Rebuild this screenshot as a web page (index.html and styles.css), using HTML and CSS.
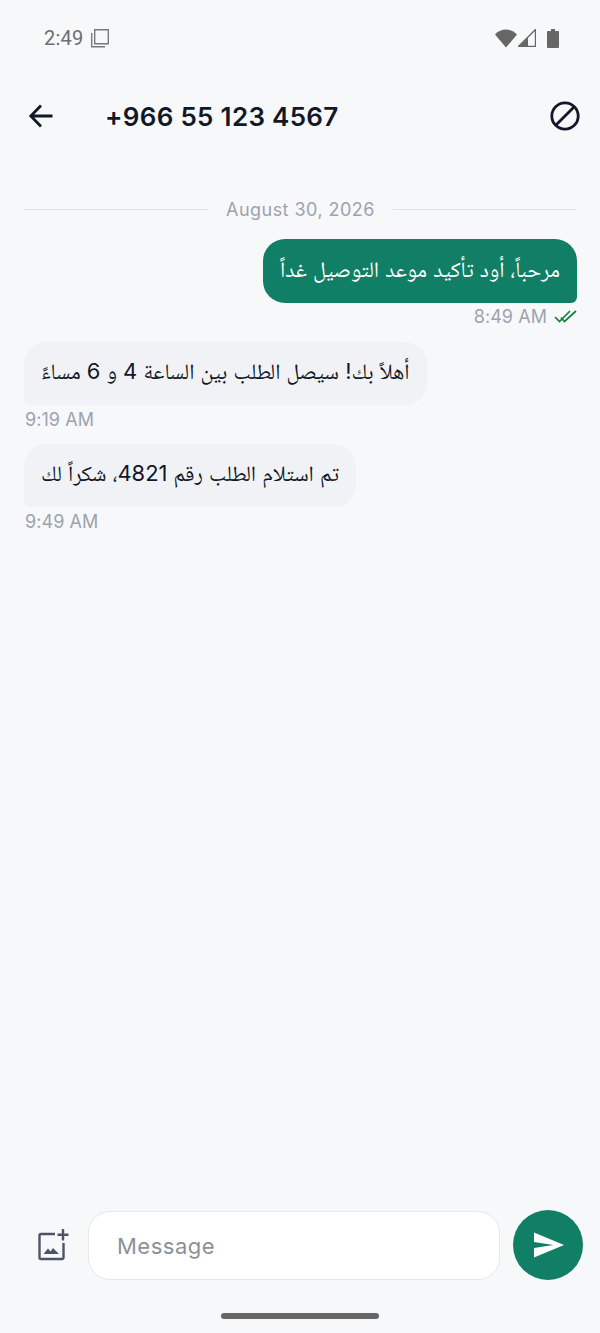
FILE: index.html
```html
<!DOCTYPE html>
<html lang="en">
<head>
<meta charset="utf-8">
<title>Chat</title>
<link rel="stylesheet" href="styles.css">
</head>
<body>
<div class="screen">
  <div class="status">
    <div class="status-left">
      <span class="clock">2:49</span>
      <svg class="ic-copy" width="20" height="20" viewBox="0 0 20 20"><path d="M4.700 1.700h13.600v14.100H4.700z" fill="none" stroke="#77797c" stroke-width="1.400"/><path d="M1.700 5v13.800H15" fill="none" stroke="#77797c" stroke-width="1.400"/></svg>
    </div>
    <div class="status-right">
      <svg width="22" height="19" viewBox="0 0 22 19"><path d="M0 5.500C3 2.200 7 .5 11 .5s8 1.700 11 5L11 18.500z" fill="#666"/></svg>
      <svg width="18" height="18" viewBox="0 0 18 18"><path d="M.5 17.500 17.500.5v17z" fill="none" stroke="#666" stroke-width="1.400"/><path d="M1 17.500 10 8.500v9z" fill="#666"/></svg>
      <svg width="12" height="19" viewBox="0 0 12 19"><path d="M4 0h4v2h3a1 1 0 0 1 1 1v15a1 1 0 0 1-1 1H1a1 1 0 0 1-1-1V3a1 1 0 0 1 1-1h3z" fill="#666"/></svg>
    </div>
  </div>
  <header class="topbar">
    <svg class="back" width="26" height="24" viewBox="0 0 26 24"><path d="M24.500 12H4M13 1.500 2.800 12 13 22.500" fill="none" stroke="#111827" stroke-width="2.800"/></svg>
    <h1 class="title">+966 55 123 4567</h1>
    <svg class="block" width="30" height="30" viewBox="0 0 30 30"><circle cx="15" cy="15" r="13.200" fill="none" stroke="#111827" stroke-width="2.800"/><path d="M6 24 24 6" stroke="#111827" stroke-width="2.800"/></svg>
  </header>
  <main class="thread">
    <div class="date"><span class="rule"></span><span class="date-text">August 30, 2026</span><span class="rule"></span></div>
    <div class="msg out">
      <div class="bubble" dir="rtl">مرحباً، أود تأكيد موعد التوصيل غداً</div>
      <div class="meta"><span>8:49 AM</span>
        <svg width="23" height="14" viewBox="0 0 23 14"><path d="M1 7l4.500 4.500L16 1M7 7.500l3.500 4L22 1" fill="none" stroke="#15803d" stroke-width="1.700"/></svg>
      </div>
    </div>
    <div class="msg in">
      <div class="bubble" dir="rtl">أهلاً بك! سيصل الطلب بين الساعة 4 و 6 مساءً</div>
      <div class="meta"><span>9:19 AM</span></div>
    </div>
    <div class="msg in">
      <div class="bubble" dir="rtl">تم استلام الطلب رقم 4821، شكراً لك</div>
      <div class="meta"><span>9:49 AM</span></div>
    </div>
  </main>
  <footer class="composer">
    <svg class="attach" width="32" height="32" viewBox="0 0 32 32"><path d="M18 5H4a1.500 1.500 0 0 0-1.500 1.500v22A1.500 1.500 0 0 0 4 30h21a1.500 1.500 0 0 0 1.500-1.500V14" fill="none" stroke="#4b5563" stroke-width="2.400"/><path d="M26 0v11.500M20.500 5.700h11" stroke="#4b5563" stroke-width="2.400"/><path d="M6.500 25l4.500-5.500 2.500 3 2.500-3.500 6 6z" fill="#4b5563"/></svg>
    <div class="field">Message</div>
    <button class="send" aria-label="Send"><svg width="31" height="26" viewBox="0 0 32 26"><path d="M0 0 31 13 0 26V16L20 13 0 10z" fill="#fff"/></svg></button>
  </footer>
  <div class="nav"><span class="pill"></span></div>
</div>
</body>
</html>
```
FILE: styles.css
```css
* { box-sizing: border-box; }
html, body { margin: 0; padding: 0; }
body { background: #f7f8fa; font-family: "Inter", "Noto Naskh Arabic", sans-serif; }
.screen { width: 600px; height: 1333px; display: flex; flex-direction: column; overflow: hidden; }
.status { height: 76px; padding: 0 41px 0 44px; display: flex; align-items: center; justify-content: space-between; }
.status-left { display: flex; align-items: center; gap: 7px; }
.clock { font: 400 20px "Roboto", sans-serif; letter-spacing: .2px; color: #6b6d70; }
.status-right { display: flex; align-items: center; }
.status-right svg:nth-child(2) { margin: 0 11px 0 1px; }
.topbar { height: 82px; padding: 0 20px 2px 28px; display: flex; align-items: center; }
.back { flex: none; }
.title { margin: 0 0 0 51px; flex: 1; font: 600 26px "Inter", sans-serif; letter-spacing: .3px; color: #111827; }
.block { flex: none; }
.thread { flex: 1; padding: 41px 23px 0 24px; display: flex; flex-direction: column; }
.date { display: flex; align-items: center; gap: 18px; height: 21px; }
.rule { flex: 1; height: 1.500px; background: #e1e3e7; }
.date-text { font-size: 18px; letter-spacing: .46px; color: #9ca3af; }
.msg { display: flex; flex-direction: column; }
.msg.out { align-items: flex-end; margin-top: 19px; }
.msg.in { align-items: flex-start; margin-top: 12px; }
.msg.in + .msg.in { margin-top: 11px; }
.bubble { padding: 2px 17px 0; display: flex; align-items: center; border-radius: 22px; font-size: 21.950px; }
.out .bubble { height: 64px; background: #117e66; color: #fff; border-bottom-right-radius: 6px; }
.in .bubble { height: 63px; background: #f1f2f5; color: #111827; border-bottom-left-radius: 6px; }
.meta { display: flex; align-items: center; gap: 7px; height: 27px; font-size: 18px; letter-spacing: .06px; color: #9ca3af; }
.in .meta { padding-left: 1px; height: 28px; }
.composer { display: flex; align-items: center; padding: 0 17px 0 37px; height: 70px; }
.attach { flex: none; }
.field { margin-left: 19px; width: 412px; height: 69px; border: 1.500px solid #e5e7eb; border-radius: 22px; background: #fff; display: flex; align-items: center; padding: 2px 0 0 28px; font-size: 22px; letter-spacing: .5px; color: #8b909a; }
.send { margin-left: 13px; width: 70px; height: 70px; border: 0; padding: 0 0 0 2px; border-radius: 50%; background: #117e66; display: flex; align-items: center; justify-content: center; }
.nav { height: 53px; display: flex; justify-content: center; padding-top: 33px; }
.pill { width: 158px; height: 5.500px; border-radius: 3px; background: #666; }
```
